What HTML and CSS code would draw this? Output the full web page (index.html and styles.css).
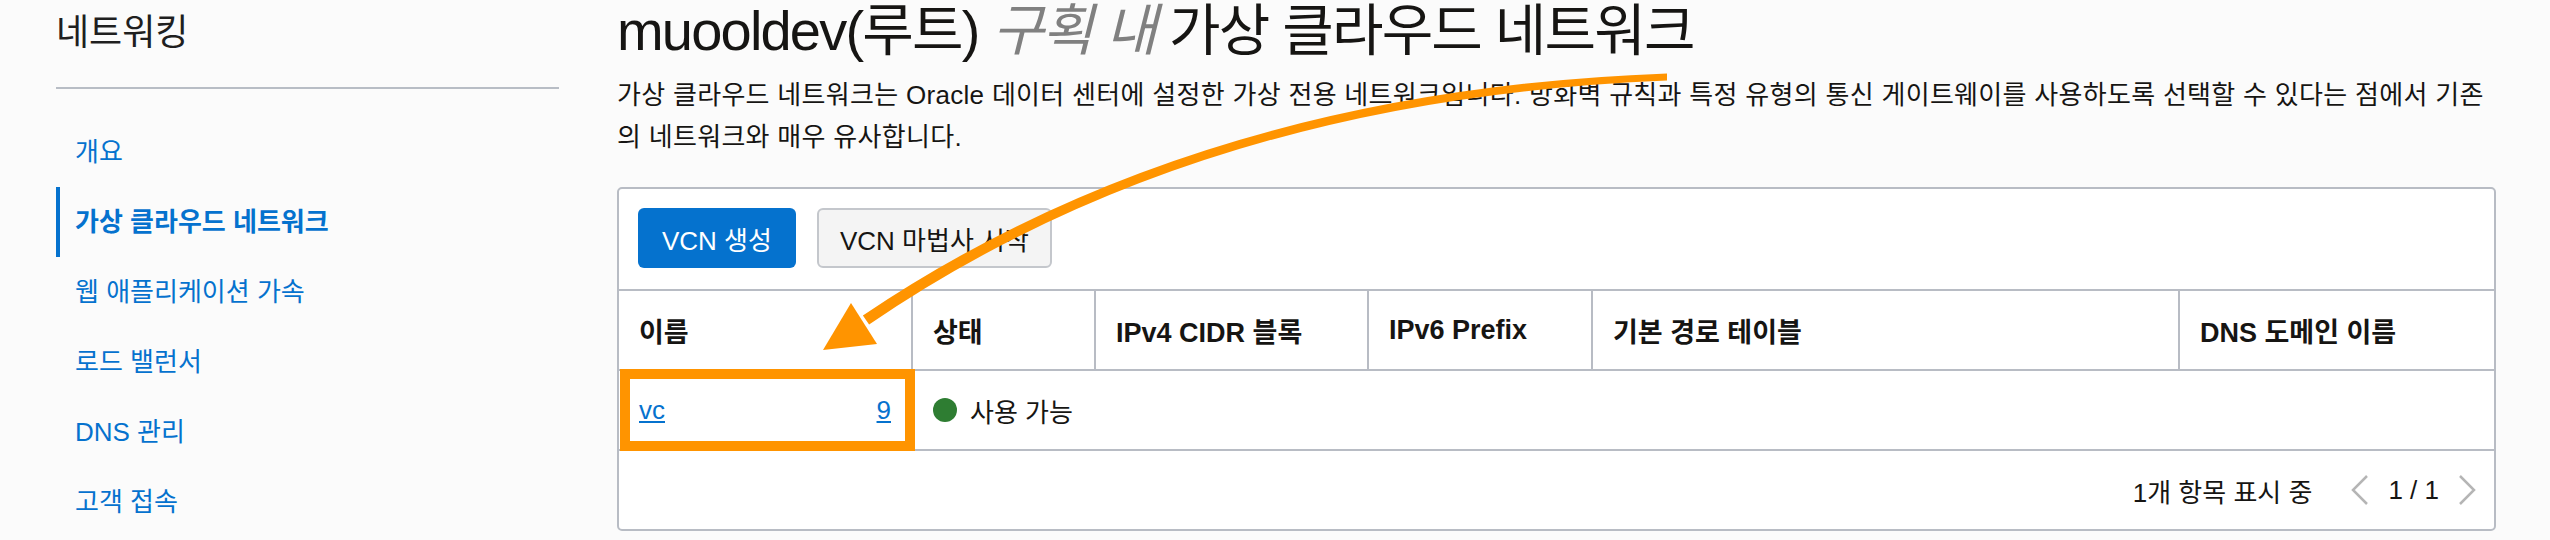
FILE: index.html
```html
<!DOCTYPE html>
<html lang="ko">
<head>
<meta charset="utf-8">
<title>가상 클라우드 네트워크</title>
<link rel="stylesheet" href="styles.css">
</head>
<body>
<div class="page">
  <aside class="sidebar">
    <h2 class="side-title">네트워킹</h2>
    <div class="side-rule"></div>
    <nav class="side-nav">
      <a class="nav-item" href="#">개요</a>
      <a class="nav-item active" href="#">가상 클라우드 네트워크</a>
      <a class="nav-item" href="#">웹 애플리케이션 가속</a>
      <a class="nav-item" href="#">로드 밸런서</a>
      <a class="nav-item" href="#">DNS 관리</a>
      <a class="nav-item" href="#">고객 접속</a>
    </nav>
  </aside>
  <main class="main">
    <h1 class="title">muooldev(루트) <em class="scope">구획 내</em> 가상 클라우드 네트워크</h1>
    <p class="desc">가상 클라우드 네트워크는 Oracle 데이터 센터에 설정한 가상 전용 네트워크입니다. 방화벽 규칙과 특정 유형의 통신 게이트웨이를 사용하도록 선택할 수 있다는 점에서 기존의 네트워크와 매우 유사합니다.</p>
    <section class="card">
      <div class="toolbar">
        <button class="btn primary">VCN 생성</button>
        <button class="btn secondary">VCN 마법사 시작</button>
      </div>
      <div class="row head">
        <div class="cell">이름</div>
        <div class="cell">상태</div>
        <div class="cell">IPv4 CIDR 블록</div>
        <div class="cell">IPv6 Prefix</div>
        <div class="cell">기본 경로 테이블</div>
        <div class="cell">DNS 도메인 이름</div>
      </div>
      <div class="row">
        <div class="cell name-cell">
          <a class="vcn-link" href="#">vc</a>
          <a class="vcn-link" href="#">9</a>
          <div class="highlight"></div>
        </div>
        <div class="cell"><span class="dot"></span><span class="status">사용 가능</span></div>
        <div class="cell"></div>
        <div class="cell"></div>
        <div class="cell"></div>
        <div class="cell"></div>
      </div>
      <div class="footer">
        <span class="footer-count">1개 항목 표시 중</span>
        <div class="pager">
          <svg class="chev" viewBox="0 0 20 32" width="20" height="32"><polyline points="17,2 3,16 17,30" /></svg>
          <span class="pages">1 / 1</span>
          <svg class="chev" viewBox="0 0 20 32" width="20" height="32"><polyline points="3,2 17,16 3,30" /></svg>
        </div>
      </div>
    </section>
  </main>
</div>
<svg class="annotation" width="2550" height="540" viewBox="0 0 2550 540">
  <path d="M1667 73.5 Q1195.6 90.7 862.9 315.5 L869.1 324.5 Q1198.4 99.3 1667 80.5 Z" />
  <polygon points="823,350 851,303 877,344" />
</svg>
</body>
</html>
```

FILE: styles.css
```css
* { box-sizing: border-box; }
html, body { margin: 0; padding: 0; }
body {
  background: #fbfbfb;
  color: #161513;
  font-family: "Liberation Sans", "Noto Sans CJK KR", sans-serif;
  font-size: 26px;
  width: 2550px;
  height: 540px;
  overflow: hidden;
  position: relative;
}
.page { display: flex; align-items: flex-start; }

.sidebar { flex: none; width: 559px; padding-left: 56px; }
.side-title {
  margin: 0;
  padding-top: 8px;
  font-size: 36px;
  line-height: 50px;
  font-weight: 400;
  color: #1f1f1f;
}
.side-rule { height: 2px; background: #b8bdc5; margin-top: 29px; }
.side-nav { display: flex; flex-direction: column; margin-top: 28px; }
.nav-item {
  display: block;
  height: 70px;
  line-height: 70px;
  padding-left: 19px;
  color: #0572ce;
  text-decoration: none;
  font-size: 26px;
}
.nav-item.active {
  border-left: 4px solid #0572ce;
  padding-left: 15px;
  font-weight: 700;
}

.main { flex: 1; margin-left: 58px; padding-right: 54px; min-width: 0; }
.title {
  margin: 0;
  font-size: 56px;
  line-height: 62px;
  font-weight: 400;
  letter-spacing: -1.8px;
  white-space: nowrap;
}
.scope { color: #808080; font-style: italic; }
.desc {
  margin: 12px 0 29px;
  font-size: 26px;
  line-height: 42px;
  letter-spacing: 0.3px;
}

.card {
  background: #fff;
  border: 2px solid #b8bcc4;
  border-radius: 5px;
}
.toolbar { display: flex; gap: 21px; padding: 19px 19px 21px; }
.btn {
  height: 60px;
  padding: 0 21px;
  font-family: inherit;
  font-size: 26px;
  border-radius: 6px;
  cursor: pointer;
}
.btn.primary { background: #0572ce; color: #fff; border: none; padding: 0 24px; }
.btn.secondary { background: #f4f4f4; color: #161513; border: 2px solid #c4c7cc; }

.row {
  display: grid;
  grid-template-columns: 292px 183px 273px 224px 587px 1fr;
  height: 80px;
  border-top: 2px solid #b8bcc4;
}
.cell {
  display: flex;
  align-items: center;
  padding-left: 20px;
  border-left: 2px solid #b8bcc4;
}
.cell:first-child { border-left: none; }
.row.head .cell { font-weight: 700; font-size: 27px; }
.row:not(.head) .cell { border-left-color: transparent; }

.name-cell { position: relative; justify-content: space-between; padding-right: 20px; }
.vcn-link { color: #0572ce; text-decoration: underline; }
.highlight {
  position: absolute;
  left: 1px;
  right: -4px;
  top: -2px;
  bottom: -2px;
  border: 10px solid #ff9400;
}
.dot {
  width: 24px;
  height: 24px;
  border-radius: 50%;
  background: #2e7d32;
  margin-right: 13px;
}

.footer {
  height: 80px;
  border-top: 2px solid #b8bcc4;
  display: flex;
  justify-content: flex-end;
  align-items: center;
  padding-right: 17px;
  gap: 38px;
}
.pager { display: flex; align-items: center; gap: 18px; }
.chev polyline { fill: none; stroke: #b5b5b5; stroke-width: 2.5; }

.annotation { position: absolute; left: 0; top: 0; pointer-events: none; }
.annotation path, .annotation polygon { fill: #ff9400; }
```
